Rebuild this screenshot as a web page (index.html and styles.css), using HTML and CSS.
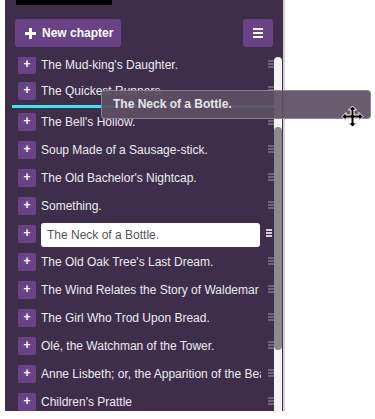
FILE: index.html
```html
<!DOCTYPE html>
<html lang="en">
<head>
    <meta charset="UTF-8">
    <meta name="viewport" content="width=device-width, initial-scale=1.0">
    <title>Chapters</title>
    <link rel="stylesheet" href="styles.css">
</head>
<body>
    <div class="sidebar">
        <div class="top-strip"></div>
        <div class="header">
            <button class="btn-new">
                <svg width="11" height="11" viewBox="0 0 11 11"><path d="M4 0h3v4h4v3H7v4H4V7H0V4h4z" fill="#fff"/></svg>
                New chapter
            </button>
            <button class="btn-menu">
                <span></span><span></span><span></span>
            </button>
        </div>
        <div class="list-wrap">
            <ul class="chapters">
                <li class="chapter first"><span class="add">+</span><span class="title">The Mud-king's Daughter.</span><span class="grip"></span></li>
                <li class="chapter"><span class="add">+</span><span class="title">The Quickest Runners.</span><span class="grip"></span></li>
                <li class="placeholder"></li>
                <li class="chapter"><span class="add">+</span><span class="title">The Bell's Hollow.</span><span class="grip"></span></li>
                <li class="chapter"><span class="add">+</span><span class="title">Soup Made of a Sausage-stick.</span><span class="grip"></span></li>
                <li class="chapter"><span class="add">+</span><span class="title">The Old Bachelor's Nightcap.</span><span class="grip"></span></li>
                <li class="chapter"><span class="add">+</span><span class="title">Something.</span><span class="grip"></span></li>
                <li class="chapter editing"><span class="add">+</span><input class="title-input" type="text" value="The Neck of a Bottle."><span class="grip"></span></li>
                <li class="chapter"><span class="add">+</span><span class="title">The Old Oak Tree's Last Dream.</span><span class="grip"></span></li>
                <li class="chapter"><span class="add">+</span><span class="title">The Wind Relates the Story of Waldemar Daa and His Daughters.</span><span class="grip"></span></li>
                <li class="chapter"><span class="add">+</span><span class="title">The Girl Who Trod Upon Bread.</span><span class="grip"></span></li>
                <li class="chapter"><span class="add">+</span><span class="title">Olé, the Watchman of the Tower.</span><span class="grip"></span></li>
                <li class="chapter"><span class="add">+</span><span class="title">Anne Lisbeth; or, the Apparition of the Beach.</span><span class="grip"></span></li>
                <li class="chapter"><span class="add">+</span><span class="title">Children's Prattle</span><span class="grip"></span></li>
            </ul>
            <div class="scrollbar"><div class="thumb"></div></div>
        </div>
    </div>

    <div class="drag-helper">The Neck of a Bottle.</div>
    <svg class="cursor" width="23" height="23" viewBox="0 0 23 23">
        <path d="M11.5 1 L15.5 5 L13 5 L13 10 L18 10 L18 7.5 L22 11.5 L18 15.5 L18 13 L13 13 L13 18 L15.5 18 L11.5 22 L7.5 18 L10 18 L10 13 L5 13 L5 15.5 L1 11.5 L5 7.5 L5 10 L10 10 L10 5 L7.5 5 Z" fill="#000" stroke="#fff" stroke-width="1"/>
    </svg>
</body>
</html>
```

FILE: styles.css
```css
:root {
    --panel: #3e2e4a;
    --purple: #6a4286;
    --text: #ecebf0;
    --cyan: #3fe2f0;
}
* {
    box-sizing: border-box;
    margin: 0;
    padding: 0;
}
body {
    background: #fff;
    font-family: "Liberation Sans", Arial, sans-serif;
    font-size: 12px;
    overflow: hidden;
}
.sidebar {
    margin-left: 5px;
    width: 280px;
    height: 411px;
    background: var(--panel);
    border-right: 2px solid #d4d2d6;
    display: flex;
    flex-direction: column;
}
.top-strip {
    margin-left: 11px;
    width: 96px;
    height: 5px;
    background: #000;
}
.header {
    display: flex;
    justify-content: space-between;
    padding: 14px 10px 10px 10px;
}
.btn-new {
    height: 28px;
    width: 106px;
    background: var(--purple);
    border: none;
    border-radius: 3px;
    color: #fff;
    font-family: inherit;
    font-size: 12px;
    font-weight: bold;
    display: flex;
    align-items: center;
    gap: 6px;
    padding-left: 10px;
}
.btn-menu {
    width: 30px;
    height: 28px;
    background: var(--purple);
    border: none;
    border-radius: 3px;
    display: flex;
    flex-direction: column;
    align-items: center;
    justify-content: center;
    gap: 2px;
}
.btn-menu span {
    display: block;
    width: 10px;
    height: 2px;
    background: #fff;
}
.list-wrap {
    flex: 1;
    display: flex;
    overflow: hidden;
}
.chapters {
    list-style: none;
    flex: 1;
    margin-top: -5px;
}
.chapter {
    height: 28px;
    display: flex;
    align-items: center;
    padding-left: 13px;
}
.chapter.first {
    height: 25px;
}
.add {
    width: 18px;
    height: 18px;
    flex: none;
    background: var(--purple);
    border-radius: 2px;
    color: #fff;
    font-weight: bold;
    font-size: 12px;
    line-height: 17px;
    text-align: center;
}
.title {
    margin-left: 5px;
    width: 220px;
    white-space: nowrap;
    overflow: hidden;
    color: var(--text);
}
.title-input {
    margin-left: 5px;
    width: 219px;
    height: 24px;
    margin-top: 2px;
    border: none;
    border-radius: 3px;
    background: #fff;
    color: #555;
    font-family: inherit;
    font-size: 12px;
    padding-left: 6px;
    outline: none;
}
.grip {
    margin-left: 7px;
    width: 6px;
    height: 8px;
    margin-top: -2px;
    background: linear-gradient(#72617f 0 2px, transparent 2px 3px, #72617f 3px 5px, transparent 5px 6px, #72617f 6px 8px);
}
.editing .grip {
    margin-left: 6px;
    background: linear-gradient(#d6d2da 0 2px, transparent 2px 3px, #d6d2da 3px 5px, transparent 5px 6px, #d6d2da 6px 8px);
}
.placeholder {
    height: 3px;
    margin-left: 7px;
    background: var(--cyan);
}
.scrollbar {
    width: 9px;
    margin-right: 1px;
    height: 360px;
    background: #f5f5f5;
    border-radius: 5px;
    padding-top: 70px;
}
.thumb {
    height: 223px;
    background: #8a8a8a;
    border-radius: 5px;
}
.drag-helper {
    position: absolute;
    left: 101px;
    top: 90px;
    width: 270px;
    height: 29px;
    background: rgba(92, 80, 99, 0.93);
    border: 1px solid rgba(150, 140, 155, 0.8);
    border-radius: 4px;
    color: #e6e4ea;
    font-weight: bold;
    font-size: 12px;
    line-height: 27px;
    padding-left: 11px;
}
.cursor {
    position: absolute;
    left: 341px;
    top: 105px;
}
```
